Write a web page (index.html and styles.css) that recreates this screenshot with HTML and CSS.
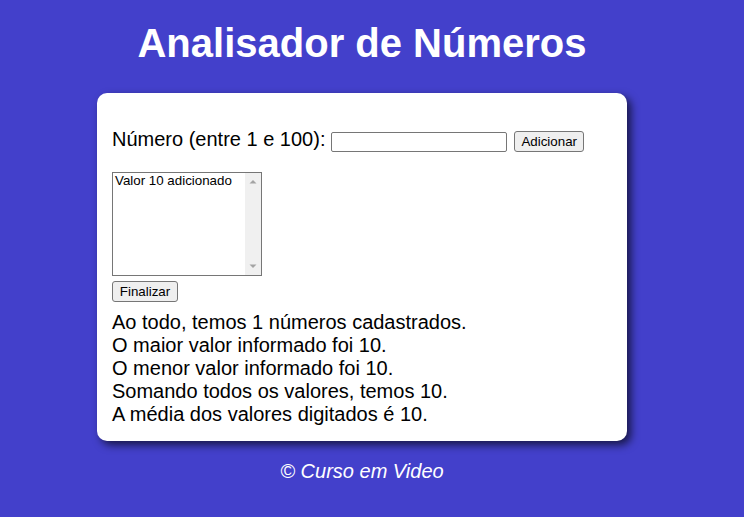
FILE: index.html
```html
<!DOCTYPE html>
<html lang="pt-BR">
<head>
<meta charset="UTF-8">
<title>Analisador de Números</title>
<link rel="stylesheet" href="styles.css">
</head>
<body>
<header class="top">
  <h1 class="title">Analisador de Números</h1>
</header>
<section class="card">
  <div class="entry">
    <label class="entry-label" for="txtnum">Número (entre 1 e 100):</label>
    <input class="num" type="number" id="txtnum">
    <input class="btn" type="button" value="Adicionar">
  </div>
  <div class="listbox">
    <select class="list" id="flista" size="10">
      <option>Valor 10 adicionado</option>
    </select>
    <div class="scroll" aria-hidden="true">
      <svg class="arrow" width="16" height="17" viewBox="0 0 16 17"><path d="M4.5 10.5 L8 7 L11.5 10.5 Z" fill="#a3a3a3"/></svg>
      <svg class="arrow" width="16" height="17" viewBox="0 0 16 17"><path d="M4.5 6.5 L8 10 L11.5 6.5 Z" fill="#a3a3a3"/></svg>
    </div>
  </div>
  <input class="btn finish" type="button" value="Finalizar">
  <div class="result">
    <p>Ao todo, temos 1 números cadastrados.</p>
    <p>O maior valor informado foi 10.</p>
    <p>O menor valor informado foi 10.</p>
    <p>Somando todos os valores, temos 10.</p>
    <p>A média dos valores digitados é 10.</p>
  </div>
</section>
<footer class="foot">
  <p>© Curso em Video</p>
</footer>
</body>
</html>
```
FILE: styles.css
```css
html, body {
  margin: 0;
  padding: 0;
}
body {
  background: #4340cb;
  font-family: "Liberation Sans", Arial, sans-serif;
  font-size: 20px;
  line-height: 23px;
  color: #000;
  padding-right: 20px;
}
.top {
  padding-top: 20px;
}
.title {
  margin: 0 0 27px;
  color: #fff;
  text-align: center;
  font-size: 40px;
  line-height: 46px;
  font-weight: bold;
}
.card {
  width: 500px;
  margin: 0 auto;
  padding: 15px;
  background: #fff;
  border-radius: 10px;
  box-shadow: 4px 4px 9px rgba(0, 0, 0, 0.65);
}
.entry {
  display: flex;
  align-items: baseline;
  margin: 20px 0 20px;
}
.entry-label {
  margin-right: 6px;
}
.num {
  box-sizing: border-box;
  width: 176px;
  height: 20px;
  margin: 0 7px 0 0;
  padding: 1px 2px;
  border: 1px solid #767676;
  border-radius: 2px;
  font: 13.333px "Liberation Sans", Arial, sans-serif;
  background: #fff;
}
.num::-webkit-inner-spin-button,
.num::-webkit-outer-spin-button {
  -webkit-appearance: none;
  margin: 0;
}
.btn {
  box-sizing: border-box;
  height: 21px;
  margin: 0;
  padding: 1px 6px;
  border: 1px solid #767676;
  border-radius: 3px;
  background: #efefef;
  color: #000;
  font: 13.333px "Liberation Sans", Arial, sans-serif;
}
.listbox {
  display: flex;
  box-sizing: border-box;
  width: 150px;
  height: 104px;
  margin: 1px 0 5px;
  border: 1px solid #767676;
  background: #fff;
}
.list {
  flex: 1;
  min-width: 0;
  height: 100%;
  margin: 0;
  padding: 0;
  border: 0;
  outline: none;
  background: #fff;
  font: 13.333px "Liberation Sans", Arial, sans-serif;
  overflow: hidden;
}
.list option {
  padding: 0 2px 1px;
  color: #000;
}
.scroll {
  width: 16px;
  display: flex;
  flex-direction: column;
  justify-content: space-between;
  background: #f0f0f0;
}
.arrow {
  display: block;
}
.finish {
  display: block;
  width: 66px;
  margin: 0 0 9px;
}
.result p {
  margin: 0;
}
.foot {
  margin-top: 19px;
  text-align: center;
  color: #fff;
  font-style: italic;
}
.foot p {
  margin: 0;
}
```
